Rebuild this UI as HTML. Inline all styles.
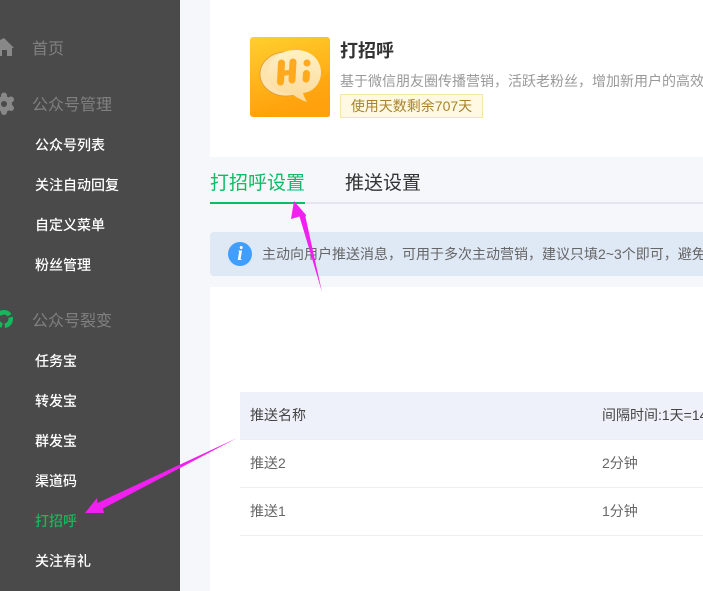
<!DOCTYPE html>
<html lang="zh">
<head>
<meta charset="utf-8">
<title>打招呼</title>
<style>
html,body{margin:0;padding:0;width:703px;height:591px;overflow:hidden;background:#f6f7fa}
body{position:relative;font-family:"Liberation Sans","Noto Sans CJK SC","WenQuanYi Zen Hei",sans-serif}
.a{position:absolute;white-space:nowrap}
.side{left:0;top:0;width:180px;height:591px;background:#4a4a4a}
.g{left:32px;font-size:16px;line-height:20px;color:#808080}
.i{left:35px;font-size:14px;line-height:20px;color:#fff;font-weight:500}
</style>
</head>
<body>
<div class="a" style="left:210px;top:0;width:493px;height:157px;background:#fff"></div>
<div class="a" style="left:210px;top:287px;width:493px;height:304px;background:#fff"></div>

<div class="a side"></div>
<svg class="a" style="left:0;top:0" width="20" height="340" viewBox="0 0 20 340">
<path d="M4 38 L14 48 L12 48 L12 56 L7 56 L7 50 L2 50 L2 56 L0 56 L0 40Z" fill="#888"/>
<g fill="#888">
<circle cx="4" cy="95.500" r="3"/><circle cx="11" cy="99.500" r="3"/><circle cx="11" cy="108" r="3"/><circle cx="4" cy="112" r="3"/><circle cx="-3" cy="108" r="3"/>
</g>
<circle cx="4" cy="104" r="5.500" fill="none" stroke="#888" stroke-width="5"/>
<circle cx="4" cy="319" r="6.700" fill="none" stroke="#13b95a" stroke-width="4.600" stroke-dasharray="11.500 2.500" transform="rotate(-15 4 319)"/>
</svg>

<div class="a g" style="top:40px">首页</div>
<div class="a g" style="top:96px">公众号管理</div>
<div class="a i" style="top:135px">公众号列表</div>
<div class="a i" style="top:175px">关注自动回复</div>
<div class="a i" style="top:215px">自定义菜单</div>
<div class="a i" style="top:255px">粉丝管理</div>
<div class="a g" style="top:312px">公众号裂变</div>
<div class="a i" style="top:351px">任务宝</div>
<div class="a i" style="top:391px">转发宝</div>
<div class="a i" style="top:431px">群发宝</div>
<div class="a i" style="top:471px">渠道码</div>
<div class="a i" style="top:511px;color:#13b95a">打招呼</div>
<div class="a i" style="top:551px">关注有礼</div>

<svg class="a" style="left:250px;top:37px" width="80" height="80" viewBox="0 0 80 80">
<defs>
<linearGradient id="bg" x1="0" y1="0" x2="0.3" y2="1"><stop offset="0" stop-color="#ffcf2e"/><stop offset="1" stop-color="#ff9f0a"/></linearGradient>
<linearGradient id="bb" x1="0" y1="0" x2="0" y2="1"><stop offset="0" stop-color="#fff1c6"/><stop offset="1" stop-color="#fbd998"/></linearGradient>
</defs>
<rect width="80" height="80" rx="3" fill="url(#bg)"/>
<path d="M80 36 L80 80 L20 80 L55 52Z" fill="#ffa50f" opacity=".45"/>
<ellipse cx="36" cy="37" rx="26" ry="22" fill="#fde3ae" stroke="#d99a3e" stroke-width=".8"/>
<path d="M18 36 C18 22 31 13 46 13 C62 13 71 24 71 35 C71 47 63 55 53 56 C54 60 56 63 57 65 C51 63 46 60 42 57 C28 57 18 48 18 36Z" fill="url(#bb)"/>
<path d="M31.500 26 L30.500 45" stroke="#ffa91f" stroke-width="7" stroke-linecap="round" fill="none"/>
<path d="M43 25 L42 43" stroke="#ffa91f" stroke-width="7" stroke-linecap="round" fill="none"/>
<path d="M32 36.500 L42 35" stroke="#ffa91f" stroke-width="5" fill="none"/>
<path d="M56.500 36.500 L56 42" stroke="#ffa91f" stroke-width="7" stroke-linecap="round"/>
<circle cx="57" cy="26" r="3.500" fill="#ffa91f"/>
</svg>

<div class="a" style="left:340px;top:39px;font-size:18px;line-height:24px;font-weight:700;color:#333">打招呼</div>
<div class="a" style="left:340px;top:71px;width:363px;overflow:hidden;font-size:14px;line-height:20px;color:#999">基于微信朋友圈传播营销，活跃老粉丝，增加新用户的高效工具</div>
<div class="a" style="left:340px;top:94px;width:141px;height:22px;border:1px solid #f7e6a9;background:#fff9e3;color:#a9832c;font-size:14px;line-height:22px;text-align:center">使用天数剩余707天</div>

<div class="a" style="left:210px;top:202px;width:493px;height:2px;background:#e3e6ee"></div>
<div class="a" style="left:210px;top:202px;width:95px;height:2px;background:#0dbc63"></div>
<div class="a" style="left:210px;top:171px;font-size:19px;line-height:26px;color:#0dbc63">打招呼设置</div>
<div class="a" style="left:345px;top:171px;font-size:19px;line-height:26px;color:#333">推送设置</div>

<div class="a" style="left:210px;top:232px;width:493px;height:44px;background:#dfe8f5;border-radius:4px 0 0 4px"></div>
<div class="a" style="left:228px;top:242px;width:24px;height:24px;border-radius:50%;background:#409eff;color:#fff;font:italic 700 20px/24px 'Liberation Serif',serif;text-align:center">i</div>
<div class="a" style="left:262px;top:244px;width:441px;overflow:hidden;font-size:14px;line-height:20px;color:#666">主动向用户推送消息，可用于多次主动营销，建议只填2~3个即可，避免打扰用户</div>

<div class="a" style="left:240px;top:392px;width:463px;height:47px;background:#eef1f9"></div>
<div class="a" style="left:240px;top:439px;width:463px;height:1px;background:#ebeef5"></div>
<div class="a" style="left:240px;top:487px;width:463px;height:1px;background:#ebeef5"></div>
<div class="a" style="left:240px;top:535px;width:463px;height:1px;background:#ebeef5"></div>
<div class="a" style="left:250px;top:405px;font-size:14px;line-height:20px;color:#444">推送名称</div>
<div class="a" style="left:602px;top:405px;width:101px;overflow:hidden;font-size:14px;line-height:20px;color:#444">间隔时间:1天=1440分钟</div>
<div class="a" style="left:250px;top:453px;font-size:14px;line-height:20px;color:#666">推送2</div>
<div class="a" style="left:602px;top:453px;font-size:14px;line-height:20px;color:#666">2分钟</div>
<div class="a" style="left:250px;top:501px;font-size:14px;line-height:20px;color:#666">推送1</div>
<div class="a" style="left:602px;top:501px;font-size:14px;line-height:20px;color:#666">1分钟</div>

<svg class="a" style="left:0;top:0" width="703" height="591" viewBox="0 0 703 591">
<path d="M322 292 L305.500 217 L306 215 L294 201 L291 219 L299.500 216.500Z" fill="#f020f0"/>
<path d="M237 438 L103 508.500 L104 513 L85 513 L97 498 L97.500 503Z" fill="#f020f0"/>
</svg>
</body>
</html>
